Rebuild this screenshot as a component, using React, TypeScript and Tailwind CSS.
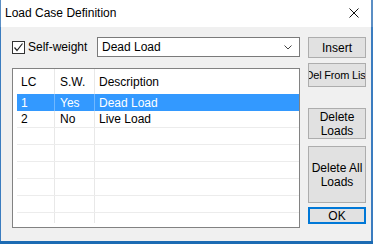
import React from 'react';

const font = { fontFamily: '"Liberation Sans", Arial, sans-serif' };

const rows = [
  { lc: '1', sw: 'Yes', desc: 'Dead Load', selected: true },
  { lc: '2', sw: 'No', desc: 'Live Load', selected: false },
  { lc: '', sw: '', desc: '', selected: false },
  { lc: '', sw: '', desc: '', selected: false },
  { lc: '', sw: '', desc: '', selected: false },
  { lc: '', sw: '', desc: '', selected: false },
  { lc: '', sw: '', desc: '', selected: false },
];

function Button({ className, children }: { className: string; children: React.ReactNode }) {
  return (
    <div
      className={`flex items-center justify-center overflow-hidden whitespace-nowrap text-center leading-[14px] bg-[#e1e1e1] border border-[#adadad] text-black ${className}`}
    >
      {children}
    </div>
  );
}

export default function App() {
  return (
    <div className="w-[373px] h-[244px] flex flex-col text-[12px] text-black" style={font}>
      {/* title bar */}
      <div className="h-[27px] bg-white border-l border-[#5b8ec4] border-r-2 flex items-center justify-between pl-[4px] pr-[12px]">
        <span className="pb-[1px]">Load Case Definition</span>
        <svg width="10" height="10" viewBox="0 0 10 10" className="mt-[-1px]">
          <path d="M0.5 0.5 L9.5 9.5 M9.5 0.5 L0.5 9.5" stroke="#111" strokeWidth="1" />
        </svg>
      </div>

      {/* body */}
      <div className="flex-1 bg-[#f0f0f0] border-l border-[#3b7cbf] border-r-2 border-r-[#3b7cbf] flex gap-[8px] pl-[11px] pt-[10px]">
        {/* left column */}
        <div className="w-[288px] flex flex-col">
          <div className="h-[20px] flex items-center">
            <div className="w-[13px] h-[13px] shrink-0 bg-white border border-[#333] flex items-center justify-center">
              <svg width="11" height="11" viewBox="0 0 11 11">
                <path d="M1.5 5.5 L4 8.5 L9.5 1.5" fill="none" stroke="#222" strokeWidth="1.2" />
              </svg>
            </div>
            <span className="ml-[3px] w-[69px] shrink-0 whitespace-nowrap">Self-weight</span>
            <div className="w-[203px] h-[20px] shrink-0 bg-white border border-[#7a7a7a] flex items-center justify-between pl-[4px] pr-[7px]">
              <span>Dead Load</span>
              <svg width="8" height="5" viewBox="0 0 8 5">
                <path d="M0.5 0.5 L4 4 L7.5 0.5" fill="none" stroke="#444" strokeWidth="1" />
              </svg>
            </div>
          </div>

          <div className="mt-[11px] h-[160px] bg-white border border-[#828282] pl-[4px] pb-[4px] flex flex-col">
            <div className="h-[25px] flex items-center shrink-0">
              <div className="w-[38px] h-full border-r border-[#e8e8e8] pl-[4px] flex items-center">LC</div>
              <div className="w-[40px] h-full border-r border-[#e8e8e8] pl-[5px] flex items-center">S.W.</div>
              <div className="flex-1 h-full pl-[4px] flex items-center">Description</div>
            </div>
            {rows.map((r, i) => (
              <div
                key={i}
                className={`h-[17px] shrink-0 flex ${r.selected ? 'bg-[#3399ff] text-white' : 'border-b border-[#ececec]'}`}
              >
                <div className={`w-[38px] h-full border-r pl-[4px] flex items-center ${r.selected ? 'border-[#70b8ff]' : 'border-[#e8e8e8]'}`}>{r.lc}</div>
                <div className={`w-[40px] h-full border-r pl-[5px] flex items-center ${r.selected ? 'border-[#70b8ff]' : 'border-[#e8e8e8]'}`}>{r.sw}</div>
                <div className="flex-1 h-full pl-[4px] flex items-center">{r.desc}</div>
              </div>
            ))}
            <div className="flex-1 flex">
              <div className="w-[38px] h-full border-r border-[#e8e8e8]" />
              <div className="w-[40px] h-full border-r border-[#e8e8e8]" />
              <div className="flex-1" />
            </div>
          </div>
        </div>

        {/* right column */}
        <div className="w-[58px] flex flex-col">
          <Button className="h-[21px]">Insert</Button>
          <Button className="h-[24px] mt-[5px] text-[11px] tracking-[-0.2px]">Del From List</Button>
          <Button className="h-[31px] mt-[21px]">
            Delete
            <br />
            Loads
          </Button>
          <Button className="h-[57px] mt-[7px]">
            Delete All
            <br />
            Loads
          </Button>
          <div className="h-[17px] mt-[4px] flex items-center justify-center bg-[#e1e1e1] border-2 border-[#0078d7]">
            OK
          </div>
        </div>
      </div>

      {/* taskbar strip */}
      <div className="h-[3px] bg-[#1c6bb3]" />
    </div>
  );
}
